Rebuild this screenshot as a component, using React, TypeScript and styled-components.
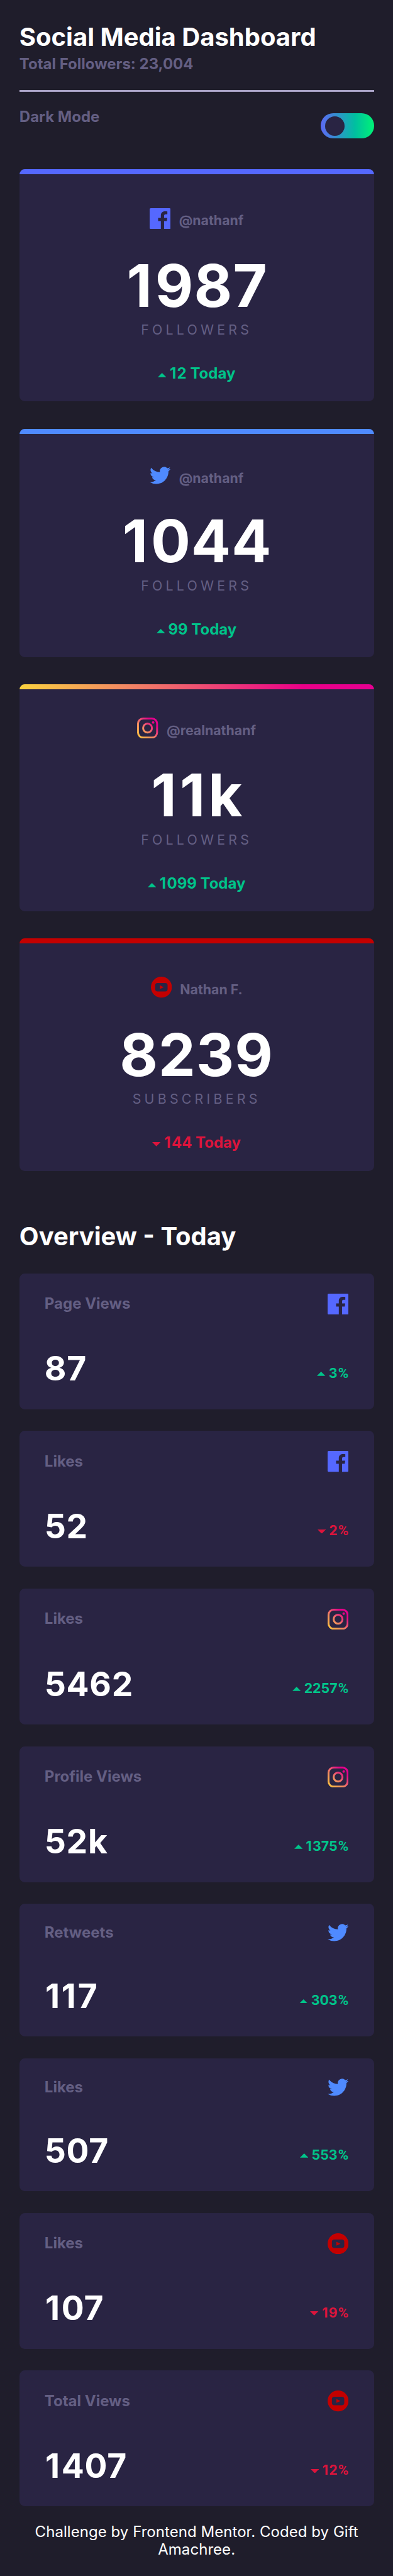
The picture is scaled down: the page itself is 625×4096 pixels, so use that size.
import React from "react";
import styled, { createGlobalStyle } from "styled-components";

// All measures are given on a 750-unit wide grid.
const u = (n: number) => `${Math.round((n * 5 / 6) * 1000) / 1000}px`;

const colors = {
  page: "#1f1d2b",
  card: "#292443",
  muted: "#645f83",
  white: "#ffffff",
  rule: "#aba4c8",
  facebook: "#5568ff",
  twitter: "#4f8aff",
  youtube: "#c40000",
  up: "#00c48a",
  down: "#dc143c",
};

const GlobalStyle = createGlobalStyle`
  * { box-sizing: border-box; margin: 0; padding: 0; }
  body {
    background: ${colors.page};
    color: ${colors.white};
    font-family: Inter, "Liberation Sans", sans-serif;
  }
`;

const Page = styled.div`
  width: 100%;
  height: ${u(4912)};
  padding: ${u(42)} ${u(36.6)} 0 ${u(37)};
  overflow: hidden;
`;

const Title = styled.h1`
  font-size: ${u(48)};
  line-height: ${u(58)};
  font-weight: 700;
`;

const Muted = styled.p`
  color: ${colors.muted};
  font-size: ${u(28.8)};
  line-height: ${u(34)};
  font-weight: 700;
`;

const Header = styled.header`
  height: ${u(132.8)};
  padding-bottom: ${u(31)};
  border-bottom: 3px solid ${colors.rule};
  white-space: nowrap;
  & > ${Muted} { margin-top: ${u(5.5)}; }
`;

const ModeRow = styled.div`
  display: flex;
  justify-content: space-between;
  align-items: flex-start;
  height: ${u(148.4)};
  padding-top: ${u(32)};
`;

const Toggle = styled.button`
  width: ${u(101)};
  height: ${u(48)};
  margin-top: ${u(9.5)};
  padding: ${u(4.8)} ${u(8)};
  border: 0;
  border-radius: ${u(24)};
  background: linear-gradient(to right, #5d68f5, #00bfa0 64%, #00f078 98%);
`;

const Knob = styled.span`
  display: block;
  width: ${u(37.2)};
  height: ${u(37.2)};
  border-radius: 50%;
  background: ${colors.card};
`;

const AccountList = styled.main`
  display: flex;
  flex-direction: column;
  gap: ${u(51.7)};
`;

const AccountCard = styled.article<{ $accent: string; $height: number }>`
  display: flex;
  flex-direction: column;
  align-items: center;
  height: ${(p) => u(p.$height)};
  border-radius: ${u(10)};
  background: linear-gradient(${colors.card}, ${colors.card}) 0 ${u(9.6)} no-repeat, ${(p) => p.$accent};
  overflow: hidden;
`;

const Handle = styled.div<{ $top: number }>`
  display: flex;
  align-items: flex-start;
  gap: ${u(16)};
  padding-top: ${(p) => u(p.$top)};
  svg { display: block; flex: none; }
`;

const HandleName = styled.span<{ $drop: number }>`
  margin-top: ${(p) => u(p.$drop)};
  color: ${colors.muted};
  font-size: ${u(25.6)};
  line-height: ${u(31)};
  font-weight: 700;
`;

const Count = styled.strong`
  margin-top: auto;
  font-size: ${u(112)};
  line-height: ${u(136)};
  font-weight: 700;
  letter-spacing: 0.012em;
`;

const Unit = styled.span`
  color: ${colors.muted};
  font-size: ${u(25.6)};
  line-height: ${u(32)};
  font-weight: 400;
  letter-spacing: 0.245em;
`;

const TodayRow = styled.div`
  padding: ${u(51)} 0 ${u(36)};
`;

const Change = styled.span<{ $down?: boolean; $size: number; $nudge: number }>`
  display: flex;
  align-items: center;
  gap: ${u(6.2)};
  color: ${(p) => (p.$down ? colors.down : colors.up)};
  font-size: ${(p) => u(p.$size)};
  line-height: ${u(34)};
  font-weight: 700;
  svg { display: block; margin-top: ${(p) => u(p.$nudge)}; }
`;

const Ones = styled.span`
  margin-left: 0.02em;
  letter-spacing: 0.055em;
`;

const Percent = styled.span`
  margin-left: 0.05em;
  font-family: Roboto, sans-serif;
  font-size: 1.05em;
  line-height: 1;
  letter-spacing: 0;
`;

const SectionTitle = styled.h2`
  margin-top: ${u(96.2)};
  height: ${u(99.5)};
  font-size: ${u(48)};
  line-height: ${u(58)};
  font-weight: 700;
`;

const StatList = styled.section`
  display: flex;
  flex-direction: column;
  gap: ${u(41.6)};
`;

const StatCard = styled.article<{ $height: number }>`
  display: flex;
  flex-direction: column;
  justify-content: space-between;
  height: ${(p) => u(p.$height)};
  padding: ${u(38.4)} ${u(48.3)} ${u(38.4)} ${u(48)};
  border-radius: ${u(10)};
  background: ${colors.card};
`;

const StatRow = styled.div<{ $align: string }>`
  display: flex;
  justify-content: space-between;
  align-items: ${(p) => p.$align};
  svg { display: block; }
`;

const StatValue = styled.strong`
  font-size: ${u(64)};
  line-height: ${u(77)};
  font-weight: 700;
  letter-spacing: 0.013em;
`;

const StatChange = styled.div`
  padding-bottom: ${u(14)};
`;

const Footer = styled.footer`
  margin-top: ${u(32.4)};
  font-size: ${u(28.8)};
  line-height: ${u(33.6)};
  letter-spacing: 0.002em;
  text-align: center;
`;

type Network = "facebook" | "twitter" | "instagram" | "youtube";

const Icon = ({ name, id }: { name: Network; id: string }) => {
  const h = name === "twitter" ? 17 : 20;
  return (
    <svg width={40 * 5 / 6} height={h * 2 * 5 / 6} viewBox={`0 0 20 ${h}`} aria-hidden="true">
      {name === "facebook" && (
        <path
          fill={colors.facebook}
          d="M18.896 0H1.104C.494 0 0 .494 0 1.104v17.793C0 19.506.494 20 1.104 20h9.58v-7.745H8.076V9.237h2.606V7.01c0-2.583 1.578-3.99 3.883-3.99 1.104 0 2.052.082 2.329.119v2.7h-1.598c-1.254 0-1.496.597-1.496 1.47v1.928h2.989l-.39 3.018h-2.6V20h5.098c.608 0 1.102-.494 1.102-1.104V1.104C20 .494 19.506 0 18.896 0z"
        />
      )}
      {name === "twitter" && (
        <path
          fill={colors.twitter}
          d="M20 2.172a8.192 8.192 0 01-2.357.646 4.11 4.11 0 001.805-2.27 8.22 8.22 0 01-2.606.996A4.103 4.103 0 009.85 5.288a11.645 11.645 0 01-8.459-4.29 4.118 4.118 0 00-.555 2.066 4.1 4.1 0 001.825 3.415 4.074 4.074 0 01-1.858-.513v.052a4.105 4.105 0 003.29 4.022 4.01 4.01 0 01-1.852.072 4.106 4.106 0 003.833 2.85A8.268 8.268 0 010 14.658a11.616 11.616 0 006.29 1.843c7.547 0 11.675-6.252 11.675-11.675 0-.18-.004-.355-.013-.53A8.3 8.3 0 0020 2.172z"
        />
      )}
      {name === "instagram" && (
        <>
          <defs>
            <linearGradient id={id} gradientUnits="userSpaceOnUse" x1="1" y1="20" x2="19" y2="1">
              <stop offset="0" stopColor="#fdc93c" />
              <stop offset=".4" stopColor="#f28a62" />
              <stop offset=".8" stopColor="#e9008a" />
              <stop offset="1" stopColor="#e60091" />
            </linearGradient>
          </defs>
          <g fill="none" stroke={`url(#${id})`} strokeWidth="1.8">
            <rect x=".9" y=".9" width="18.2" height="18.2" rx="4.9" />
            <circle cx="10" cy="10" r="4.235" />
          </g>
          <circle cx="15.338" cy="4.662" r="1.2" fill={`url(#${id})`} />
        </>
      )}
      {name === "youtube" && (
        <path
          fill={colors.youtube}
          fillRule="evenodd"
          d="M10 0a10 10 0 100 20 10 10 0 000-20zM6.5 5.95h7c1.7 0 2.4.7 2.4 2.2v3.7c0 1.5-.7 2.2-2.4 2.2h-7c-1.7 0-2.4-.7-2.4-2.2v-3.7c0-1.5.7-2.2 2.4-2.2zM8.4 8.1v3.8l3.9-1.9z"
        />
      )}
    </svg>
  );
};

const Arrow = ({ down }: { down?: boolean }) => (
  <svg width={16 * 5 / 6} height={8 * 5 / 6} viewBox="0 0 8 4" aria-hidden="true">
    <path fill="currentColor" d={down ? "M0 0h8L4 4z" : "M0 4l4-4 4 4z"} />
  </svg>
);

// Opens up the narrow leading ones and sets the percent sign in a slimmer face.
const Figure = ({ children }: { children: string }) => {
  const [, ones, rest, percent] = children.match(/^(1*)([^%]*)(%?)$/)!;
  return (
    <span>
      {ones && <Ones>{ones}</Ones>}
      {rest}
      {percent && <Percent>{percent}</Percent>}
    </span>
  );
};

const accounts = [
  { net: "facebook", name: "@nathanf", count: "1987", unit: "FOLLOWERS", today: "12 Today", accent: colors.facebook, height: 443, top: 73.7, drop: 8.7 },
  { net: "twitter", name: "@nathanf", count: "1044", unit: "FOLLOWERS", today: "99 Today", accent: colors.twitter, height: 436.3, top: 72.5, drop: 7 },
  { net: "instagram", name: "@realnathanf", count: "11k", unit: "FOLLOWERS", today: "1099 Today", accent: "linear-gradient(to right, #fad23f, #f28a62 29%, #ea0088 80%, #e60091)", height: 433.3, top: 63.5, drop: 9.2 },
  { net: "youtube", name: "Nathan F.", count: "8239", unit: "SUBSCRIBERS", today: "144 Today", down: true, accent: colors.youtube, height: 443, top: 73.2, drop: 9.3 },
] as const;

const stats = [
  { label: "Page Views", net: "facebook", value: "87", change: "3%" },
  { label: "Likes", net: "facebook", value: "52", change: "2%", down: true },
  { label: "Likes", net: "instagram", value: "5462", change: "2257%" },
  { label: "Profile Views", net: "instagram", value: "52k", change: "1375%" },
  { label: "Retweets", net: "twitter", value: "117", change: "303%" },
  { label: "Likes", net: "twitter", value: "507", change: "553%" },
  { label: "Likes", net: "youtube", value: "107", change: "19%", down: true },
  { label: "Total Views", net: "youtube", value: "1407", change: "12%", down: true },
] as { label: string; net: Network; value: string; change: string; down?: boolean }[];

export default function App() {
  return (
    <Page>
      <GlobalStyle />
      <Header>
        <Title>Social Media Dashboard</Title>
        <Muted>Total Followers: 23,004</Muted>
      </Header>
      <ModeRow>
        <Muted>Dark Mode</Muted>
        <Toggle aria-label="Dark Mode"><Knob /></Toggle>
      </ModeRow>
      <AccountList>
        {accounts.map((a) => (
          <AccountCard key={a.net} $accent={a.accent} $height={a.height}>
            <Handle $top={a.top}>
              <Icon name={a.net} id={`account-${a.net}`} />
              <HandleName $drop={a.drop}>{a.name}</HandleName>
            </Handle>
            <Count><Figure>{a.count}</Figure></Count>
            <Unit>{a.unit}</Unit>
            <TodayRow>
              <Change $size={28.8} $nudge={5.4} $down={"down" in a}>
                <Arrow down={"down" in a} />
                <Figure>{a.today}</Figure>
              </Change>
            </TodayRow>
          </AccountCard>
        ))}
      </AccountList>
      <SectionTitle>Overview - Today</SectionTitle>
      <StatList>
        {stats.map((s, i) => (
          <StatCard key={i} $height={s.net === "twitter" ? 253.2 : 259.2}>
            <StatRow $align="center">
              <Muted>{s.label}</Muted>
              <Icon name={s.net} id={`stat-${i}`} />
            </StatRow>
            <StatRow $align="flex-end">
              <StatValue><Figure>{s.value}</Figure></StatValue>
              <StatChange>
                <Change $size={25.6} $nudge={3.8} $down={s.down}>
                  <Arrow down={s.down} />
                  <Figure>{s.change}</Figure>
                </Change>
              </StatChange>
            </StatRow>
          </StatCard>
        ))}
      </StatList>
      <Footer>Challenge by Frontend Mentor. Coded by Gift Amachree.</Footer>
    </Page>
  );
}
